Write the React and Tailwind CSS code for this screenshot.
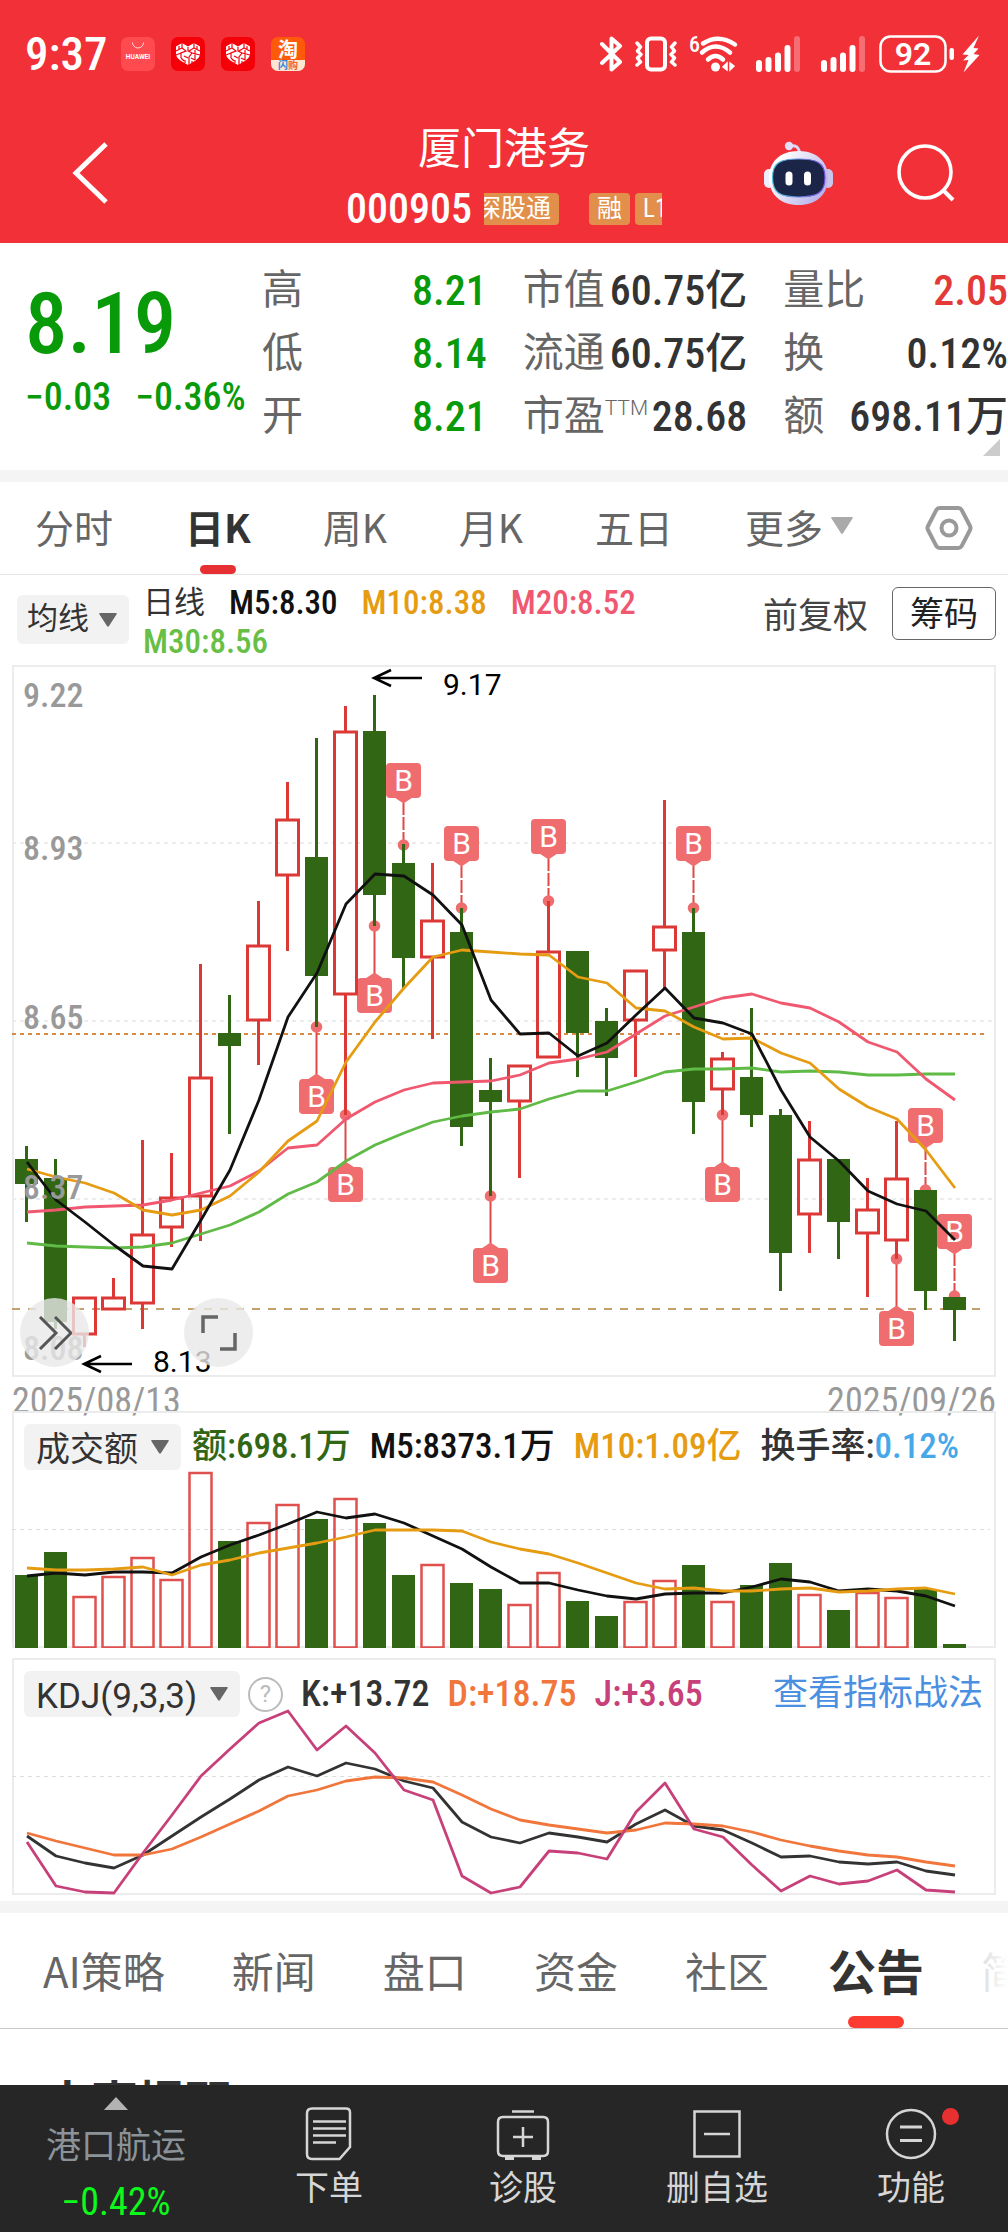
import { useState } from "react";

// [up?, high, bodyTop, bodyBottom, low] in chart units
const candles = [
  [0, 481, 494, 519, 557],
  [0, 494, 513, 657, 664],
  [1, 633, 633, 669, 682],
  [1, 613, 633, 644, 644],
  [1, 475, 570, 638, 664],
  [1, 488, 533, 562, 582],
  [1, 299, 413, 531, 576],
  [0, 330, 368, 381, 469],
  [1, 236, 281, 355, 400],
  [1, 117, 155, 210, 286],
  [0, 73, 192, 311, 362],
  [1, 41, 67, 329, 450],
  [0, 30, 66, 230, 261],
  [0, 179, 198, 293, 323],
  [1, 198, 256, 292, 374],
  [0, 243, 267, 462, 481],
  [0, 393, 425, 437, 531],
  [1, 401, 401, 436, 513],
  [1, 236, 287, 392, 392],
  [0, 286, 286, 368, 412],
  [0, 343, 356, 393, 431],
  [1, 306, 306, 355, 412],
  [1, 135, 262, 285, 323],
  [0, 243, 267, 437, 469],
  [1, 387, 394, 424, 450],
  [0, 343, 412, 450, 462],
  [0, 444, 450, 588, 626],
  [1, 456, 495, 549, 588],
  [0, 494, 494, 557, 594],
  [1, 513, 545, 568, 632],
  [1, 456, 514, 575, 594],
  [0, 525, 525, 626, 645],
  [0, 632, 632, 645, 676],
];

const maLines = [
  {
    color: "#5fba46",
    points: [578, 581, 582, 583, 582, 578, 569, 560, 547, 529, 517, 496, 480, 468, 457, 451, 447, 444, 434, 426, 426, 417, 407, 404, 404, 403, 407, 406, 407, 410, 410, 409, 409],
  },
  {
    color: "#f0586f",
    points: [547, 545, 542, 541, 540, 535, 528, 521, 506, 483, 480, 454, 437, 425, 418, 417, 416, 410, 398, 394, 387, 369, 351, 342, 333, 329, 338, 343, 357, 377, 387, 414, 435],
  },
  {
    color: "#e69c12",
    points: [504, 512, 518, 528, 545, 550, 545, 531, 507, 476, 456, 397, 357, 323, 292, 285, 287, 289, 290, 312, 318, 343, 346, 362, 374, 373, 388, 398, 424, 442, 454, 485, 523],
  },
  {
    color: "#111111",
    points: [497, 535, 557, 580, 601, 604, 555, 505, 435, 352, 308, 239, 209, 211, 230, 260, 335, 369, 368, 391, 378, 350, 323, 353, 358, 369, 425, 472, 496, 526, 539, 546, 575],
  },
];

// [candle index, dot y, label above?]
const signals = [
  [10, 362, false],
  [11, 450, false],
  [12, 261, false],
  [13, 180, true],
  [15, 243, true],
  [16, 531, false],
  [18, 236, true],
  [23, 243, true],
  [24, 450, false],
  [30, 594, false],
  [31, 525, true],
  [32, 631, true],
];

const volumeTops = [164, 141, 186, 166, 147, 169, 62, 130, 112, 94, 108, 88, 112, 164, 154, 172, 178, 194, 162, 190, 205, 191, 170, 154, 191, 174, 152, 184, 199, 182, 187, 178, 233];
const volumeM5 = [165, 162, 164, 161, 161, 162, 146, 134, 124, 113, 101, 107, 103, 112, 125, 138, 156, 172, 172, 179, 185, 188, 183, 182, 182, 176, 168, 171, 180, 178, 180, 185, 195];
const volumeM10 = [157, 159, 159, 158, 156, 164, 154, 149, 142, 137, 132, 126, 119, 119, 119, 120, 131, 138, 143, 152, 162, 172, 178, 177, 180, 180, 178, 177, 181, 180, 178, 177, 183];

const kdjLines = [
  {
    color: "#333333",
    points: [178, 198, 205, 210, 197, 178, 159, 141, 122, 109, 118, 105, 111, 123, 130, 164, 179, 185, 175, 179, 184, 166, 152, 168, 172, 185, 199, 198, 204, 206, 204, 213, 217],
  },
  {
    color: "#f0763c",
    points: [175, 183, 190, 197, 197, 191, 179, 166, 153, 138, 132, 123, 119, 120, 124, 137, 151, 162, 167, 171, 175, 172, 165, 166, 168, 174, 182, 188, 193, 197, 199, 204, 208],
  },
  {
    color: "#c8407a",
    points: [184, 228, 234, 235, 195, 157, 118, 91, 65, 53, 92, 68, 95, 132, 142, 218, 235, 229, 193, 195, 201, 154, 125, 171, 179, 207, 233, 218, 226, 223, 212, 232, 234],
  },
];

const quotes = [
  ["高", "8.21", "text-[#099a09]"],
  ["市值", "60.75亿", "text-[#333]"],
  ["量比", "2.05", "text-[#e33a38]"],
  ["低", "8.14", "text-[#099a09]"],
  ["流通", "60.75亿", "text-[#333]"],
  ["换", "0.12%", "text-[#333]"],
  ["开", "8.21", "text-[#099a09]"],
  ["市盈", "28.68", "text-[#333]", "TTM"],
  ["额", "698.11万", "text-[#333]"],
];

const centerX = (i) => 15 + i * 29;
const toPoints = (ys) => ys.map((y, i) => `${centerX(i)},${y}`).join(" ");

const Line = ({ color, points }) => (
  <polyline points={toPoints(points)} fill="none" stroke={color} strokeWidth="2.8" strokeLinejoin="round" />
);

const Triangle = ({ className }) => (
  <svg className={className} viewBox="0 0 18 14" fill="currentColor" aria-hidden="true">
    <path d="M1 0h16q1.400 0 .6 1.200L10 13q-1 1.400-2 0L.4 1.200Q-.4 0 1 0Z" />
  </svg>
);

const PillSelect = ({ label, value, className }) => (
  <div className="relative shrink-0">
    <select
      aria-label={label}
      defaultValue={value}
      className={`block appearance-none rounded-md bg-[#f2f2f2] text-[#333] ${className}`}
    >
      <option>{value}</option>
    </select>
    <Triangle className="pointer-events-none absolute right-3 top-1/2 w-[18px] -translate-y-1/2 text-[#666]" />
  </div>
);

const SignalBars = () => (
  <svg className="h-9 w-11" viewBox="0 0 44 36" fill="#fff" aria-hidden="true">
    <rect x="0" y="24" width="6" height="12" rx="3" />
    <rect x="9.500" y="21" width="6" height="15" rx="3" />
    <rect x="19" y="16.500" width="6" height="19.500" rx="3" />
    <rect x="28.500" y="9" width="6" height="27" rx="3" />
    <rect x="38" y="0" width="6" height="36" rx="3" opacity=".3" />
  </svg>
);

const HeartApp = () => (
  <svg className="size-[34px]" viewBox="0 0 34 34" aria-hidden="true">
    <rect width="34" height="34" rx="7" fill="#f50009" />
    <path d="M5 9.500 11 6l6 3.500L23 6l6 3.500V17c0 3-3 5.500-6 7.500L17 28l-6-3.500C8 22.500 5 20 5 17Z" fill="#fff" />
    <path
      d="M11 6v5l-6 3M11 11l4 3-5 2v5M5 18l5-2M17 10v4l4 2-3 4v8M13 19l4 2M23 6v5l-5 3M23 11l6 3M21 16l8 2M24 13v10M20 21l4 2M10 21l3 3M8 9v3M26 9v3M14 23v3M21 24v2"
      stroke="#f50009"
      strokeWidth="1.200"
      fill="none"
    />
  </svg>
);

const StatusBar = () => (
  <div className="flex h-[108px] items-center pl-[25px] pr-[28px]">
    <span className="text-[47px] font-medium leading-[48px]">9:37</span>
    <div className="ml-[14px] flex gap-4">
      <svg className="size-[34px]" viewBox="0 0 34 34" aria-hidden="true">
        <rect width="34" height="34" rx="7" fill="#ff4a50" />
        <path d="M11.500 5.500a5.500 5.500 0 0 0 11 0" stroke="#fff" strokeOpacity=".8" fill="none" />
        <text x="17" y="22" fontSize="6.500" fontWeight="700" fill="#fff" textAnchor="middle" fontFamily="Roboto, sans-serif">HUAWEI</text>
      </svg>
      <HeartApp />
      <HeartApp />
      <svg className="size-[34px] overflow-visible" viewBox="0 0 34 34" aria-hidden="true">
        <rect width="34" height="34" rx="7" fill="#ff5a0a" />
        <path d="M0 23h34v4a7 7 0 0 1-7 7H7a7 7 0 0 1-7-7Z" fill="#fde6d4" />
        <text x="17" y="20" fontSize="20" fontWeight="700" fill="#fff" textAnchor="middle">淘</text>
        <text x="17" y="32" fontSize="10" fontWeight="700" fill="#f0641e" textAnchor="middle">
          <tspan fill="#2f86d8">闪</tspan>购
        </text>
      </svg>
    </div>
    <div className="ml-auto flex items-center">
      <svg className="h-9 w-6" viewBox="0 0 24 36" fill="none" stroke="#fff" strokeWidth="4" strokeLinecap="round" strokeLinejoin="round" aria-hidden="true">
        <path d="m3 8 18 18-8.500 7.500v-31L21 10 3 27" />
      </svg>
      <svg className="ml-3 h-9 w-[42px]" viewBox="0 0 42 36" fill="none" stroke="#fff" strokeWidth="3.500" strokeLinecap="round" strokeLinejoin="round" aria-hidden="true">
        <rect x="12" y="2.500" width="18" height="31" rx="4" strokeWidth="4" />
        <path d="M2 7l3.500 4L2.500 15 6 18.500 2.500 22 5.500 26 2 29M40 7l-3.500 4 3 4-3.500 3.500 3.500 3.500-3 4 3.500 3" />
      </svg>
      <svg className="ml-3 h-[38px] w-[49px] overflow-visible" viewBox="0 0 49 38" fill="none" stroke="#fff" strokeWidth="4.500" strokeLinecap="round" aria-hidden="true">
        <text x="0" y="17" fontSize="22" fontWeight="500" fill="#fff" stroke="none">6</text>
        <path d="M14 8.500q15.500-10 32 1M13 17.500q13.500-12 28 0M19 24.500q7.500-7 15 0" />
        <circle cx="26.500" cy="32" r="4.500" fill="#fff" stroke="none" />
        <path d="M38 28v7l-4-3ZM41 28v7l4-4Z" fill="#fff" strokeWidth="1.500" />
      </svg>
      <div className="ml-[18px] flex gap-[21px]">
        <SignalBars />
        <SignalBars />
      </div>
      <svg className="ml-[14px] h-[38px] w-[76px]" viewBox="0 0 76 38" fill="none" aria-hidden="true">
        <rect x="1.500" y="1.500" width="65" height="35" rx="10" stroke="#fff" strokeWidth="2.500" />
        <rect x="70.500" y="13" width="4.500" height="12" rx="2.200" fill="#fff" />
        <text x="34" y="30" fontSize="32" fontWeight="600" fill="#fff" textAnchor="middle" fontFamily="Roboto, sans-serif">92</text>
      </svg>
      <svg className="ml-[7px] h-[38px] w-[18px]" viewBox="0 0 18 38" fill="#fff" aria-hidden="true">
        <path d="M17 .5.500 19.500l6 .5-5.500 5.500 5.500-.5-5 12.500L17.500 20l-6-1 5-5.500-5-.5Z" />
      </svg>
    </div>
  </div>
);

const Robot = () => (
  <svg className="h-16 w-[69px]" viewBox="0 0 69 64" aria-hidden="true">
    <defs>
      <linearGradient id="robotHead" x1="0" y1="0" x2="1" y2=".6">
        <stop offset=".2" stopColor="#ffffff" />
        <stop offset="1" stopColor="#b9b4ea" />
      </linearGradient>
      <linearGradient id="robotRim" x1="0" y1="0" x2="1" y2="0">
        <stop offset="0" stopColor="#4fc3dd" />
        <stop offset="1" stopColor="#7b4ee0" />
      </linearGradient>
    </defs>
    <path d="M25 5c8-1 9 1 11 7" stroke="#dcd6f5" strokeWidth="3" fill="none" />
    <circle cx="25" cy="5" r="4.200" fill="#e4defa" />
    <rect x="0" y="28" width="10" height="19" rx="5" fill="#efedfb" />
    <rect x="59" y="28" width="10" height="19" rx="5" fill="#c9c6ee" />
    <path d="M34.500 10C53 10 64 21 64 36.500 64 54 52 64 34.500 64S5 54 5 36.500C5 21 16 10 34.500 10Z" fill="url(#robotHead)" />
    <path d="M34.500 18C52 18 61 21 61 36.500S53 56 34.500 56 8.500 52 8.500 36.500 17 18 34.500 18Z" fill="#1b2547" stroke="url(#robotRim)" strokeWidth="1.200" />
    <rect x="21.500" y="30.500" width="7" height="14" rx="3.500" fill="#fff" />
    <rect x="40" y="30.500" width="7" height="14" rx="3.500" fill="#fff" />
  </svg>
);

const Tag = ({ children }) => (
  <span className="shrink-0 rounded-sm bg-[#e28f4b] px-2 text-[25px] leading-8">{children}</span>
);

const Header = () => (
  <header className="bg-[#f23037] text-white">
    <StatusBar />
    <div className="grid h-[135px] grid-cols-[1fr_auto_1fr] items-center pb-[10px]">
      <button type="button" aria-label="返回" className="justify-self-start pl-[72px]">
        <svg className="h-[62px] w-9" viewBox="0 0 36 62" fill="none" stroke="#fff" strokeWidth="5" aria-hidden="true">
          <path d="M34 2 4 31l30 29" />
        </svg>
      </button>
      <div className="pt-3">
        <h1 className="text-center text-[43px] leading-[59px]">厦门港务</h1>
        <div className="flex h-[59px] items-center gap-3">
          <span className="text-[42px] font-medium leading-[59px]">000905</span>
          <div className="w-[178px] overflow-hidden">
            <div className="-ml-4 flex gap-[5px]">
              <Tag>深股通</Tag>
              <span className="w-5 shrink-0" />
              <Tag>融</Tag>
              <Tag>L1</Tag>
            </div>
          </div>
        </div>
      </div>
      <div className="flex items-center justify-end gap-16 pr-[53px]">
        <button type="button" aria-label="智能助手">
          <Robot />
        </button>
        <button type="button" aria-label="搜索">
          <svg className="h-[58px] w-[58px]" viewBox="0 0 58 58" fill="none" stroke="#fff" strokeWidth="3.600" aria-hidden="true">
            <circle cx="28" cy="28" r="26" />
            <path d="m46 46 10 10" strokeWidth="4" />
          </svg>
        </button>
      </div>
    </div>
  </header>
);

const Quote = () => (
  <section className="relative flex h-[227px] pt-4">
    <div className="w-[262px] shrink-0 pl-[25px] text-[#099a09]">
      <p className="pt-[15px] text-[85px] font-medium leading-[100px]">8.19</p>
      <p className="flex gap-6 text-[38px] font-medium leading-[46px]">
        <span>−0.03</span>
        <span>−0.36%</span>
      </p>
    </div>
    <dl className="grid flex-1 auto-rows-[63px] grid-cols-3 gap-x-9 text-[42px] leading-[63px]">
      {quotes.map(([label, value, color, sup]) => (
        <div key={label} className="flex justify-between whitespace-nowrap">
          <dt className="flex text-[41px] text-[#666]">
            {label}
            {sup && <span className="-mt-2 font-[Roboto] text-[21px] font-light">{sup}</span>}
          </dt>
          <dd className={`font-medium ${color}`}>{value}</dd>
        </div>
      ))}
    </dl>
    <svg className="absolute bottom-[14px] right-2 size-[17px]" viewBox="0 0 17 17" fill="#ccc" aria-hidden="true">
      <path d="M17 0v17H0Z" />
    </svg>
  </section>
);

const periods = ["分时", "日K", "周K", "月K", "五日"];

const PeriodTabs = () => {
  const [active, setActive] = useState("日K");
  return (
    <nav className="flex h-[93px] items-center justify-between border-b border-[#e6e6e6] pl-[35px] pr-[35px] font-['Noto_Sans_CJK_SC',sans-serif] text-[39px] text-[#666]">
      {periods.map((p) => (
        <button
          key={p}
          type="button"
          onClick={() => setActive(p)}
          className={p === active ? "relative h-full pb-1 font-bold text-[#333]" : "relative h-full pb-1"}
        >
          {p}
          {p === active && <span className="absolute bottom-0 left-1/2 h-[9px] w-9 -translate-x-1/2 rounded-full bg-[#e63034]" />}
        </button>
      ))}
      <button type="button" className="flex items-center gap-2 pb-1">
        更多
        <Triangle className="w-[22px] text-[#aaa]" />
      </button>
      <button type="button" aria-label="设置">
        <svg className="h-[46px] w-12" viewBox="0 0 48 46" fill="none" stroke="#999" strokeWidth="4" strokeLinejoin="round" aria-hidden="true">
          <path d="M14.500 3h19q2 0 3 1.700L45 21q1 2 0 4l-8.500 16.300q-1 1.700-3 1.700h-19q-2 0-3-1.700L3 25q-1-2 0-4l8.500-16.300q1-1.700 3-1.700Z" />
          <circle cx="24" cy="23" r="7.500" />
        </svg>
      </button>
    </nav>
  );
};

const Legend = () => (
  <div className="flex h-[90px] items-start pl-[17px] pr-3">
    <div className="pt-5">
      <PillSelect label="指标" value="均线" className="h-[49px] pl-[10px] pr-[40px] text-[31px]" />
    </div>
    <div className="ml-[14px] flex flex-1 flex-wrap gap-x-6 pt-2 text-[33px] font-medium leading-[39px]">
      <span className="text-[31px] font-normal text-[#333]">日线</span>
      <span className="text-[#111]">M5:8.30</span>
      <span className="text-[#e69c12]">M10:8.38</span>
      <span className="text-[#f0586f]">M20:8.52</span>
      <span className="text-[#67bf46]">M30:8.56</span>
    </div>
    <button type="button" className="mt-[12px] text-[35px] leading-[60px] text-[#444]">前复权</button>
    <button type="button" className="ml-6 mt-3 h-[53px] w-[104px] rounded-md border border-[#666] text-[34px] leading-[50px] text-[#222]">
      筹码
    </button>
  </div>
);

const Marker = ({ index, y, above }) => {
  const x = centerX(index) - 0.5;
  const top = above ? y - 82 : y + 52;
  return (
    <g>
      <path
        d={above ? `M${x} ${y}V${top + 40}` : `M${x} ${y}V${top - 4}`}
        stroke="#e04848"
        strokeWidth="2"
        strokeDasharray={above ? "13 2" : undefined}
      />
      <circle cx={x} cy={y} r="5.800" fill="#ef6d6f" />
      <path
        d={above ? `M${x - 9} ${top + 34.5}h18l-9 6Z` : `M${x - 9} ${top + 0.5}h18l-9-6Z`}
        fill="#ef6d6f"
      />
      <rect x={x - 17.5} y={top} width="35" height="35" rx="4" fill="#ef6d6f" />
      <text x={x} y={top + 28} fontSize="30" fill="#fff" textAnchor="middle" fontFamily="Roboto, sans-serif">B</text>
    </g>
  );
};

const Arrow = ({ x, y }) => (
  <path d={`M${x + 48} ${y}H${x}m17-8L${x} ${y}l17 8`} fill="none" stroke="#000" strokeWidth="2.500" />
);

const CandleChart = () => (
  <div className="relative">
    <svg className="block w-full" viewBox="0 0 984 712" role="img" aria-label="日K线图">
      <rect x="1" y="1" width="982" height="710" fill="none" stroke="#ececec" strokeWidth="2" />
      <path d="M0 178H984M0 356H984M0 534H984" stroke="#ececec" strokeWidth="2" strokeDasharray="4 4" />
      <path d="M0 369H976" stroke="#d68a45" strokeWidth="2" strokeDasharray="4 4" />
      <path d="M0 644H976" stroke="#c4a06c" strokeWidth="2" strokeDasharray="8 8" />
      {signals.map(([index, y, above]) => (
        <Marker key={index} index={index} y={y} above={above} />
      ))}
      {candles.map(([up, high, top, bottom, low], i) => {
        const x = centerX(i) - 0.5;
        return up ? (
          <g key={i} stroke="#dc3836" strokeWidth="3" fill="none">
            <path d={`M${x} ${high}V${top}M${x} ${bottom}V${low}`} />
            <rect x={x - 11} y={top} width="22" height={bottom - top} />
          </g>
        ) : (
          <g key={i} fill="#306614">
            <rect x={x - 1.5} y={high} width="3" height={low - high} />
            <rect x={x - 11.5} y={top} width="23" height={bottom - top} />
          </g>
        );
      })}
      {maLines.map((line) => (
        <Line key={line.color} {...line} />
      ))}
      <g fontSize="34" fontWeight="500" fill="#999">
        <text x="11" y="42">9.22</text>
        <text x="11" y="195">8.93</text>
        <text x="11" y="364">8.65</text>
        <text x="11" y="534">8.37</text>
        <text x="11" y="695">8.08</text>
      </g>
      <g fontSize="30" fill="#000">
        <text x="431" y="30" fontFamily="Roboto, sans-serif">9.17</text>
        <text x="141" y="707" fontFamily="Roboto, sans-serif">8.13</text>
      </g>
      <Arrow x={362} y={13} />
      <Arrow x={72} y={699} />
    </svg>
    <div className="absolute bottom-[10px] left-2 flex gap-[95px]">
      <button type="button" aria-label="展开" className="flex size-[69px] items-center justify-center rounded-full bg-[#e8e8e8]/80">
        <svg className="h-[34px] w-[34px]" viewBox="0 0 34 34" fill="none" stroke="#555" strokeWidth="3" aria-hidden="true">
          <path d="m2 1 16 16L2 33M17 1l16 16-16 16" />
        </svg>
      </button>
      <button type="button" aria-label="全屏" className="flex size-[69px] items-center justify-center rounded-full bg-[#e8e8e8]/80">
        <svg className="h-9 w-9" viewBox="0 0 36 36" fill="none" stroke="#666" strokeWidth="3.500" aria-hidden="true">
          <path d="M2 18V2h15M34 18v16H19" />
        </svg>
      </button>
    </div>
  </div>
);

const VolumePanel = () => (
  <section className="grid">
    <svg className="col-start-1 row-start-1 block w-full" viewBox="0 0 984 237" role="img" aria-label="成交额">
      <rect x="1" y="1" width="982" height="235" fill="none" stroke="#ececec" strokeWidth="2" />
      <path d="M0 118.500H978" stroke="#ddd" strokeDasharray="4 4" />
      {volumeTops.map((top, i) => {
        const x = centerX(i) - 0.5;
        return candles[i][0] ? (
          <rect key={i} x={x - 11} y={top} width="22" height={236.5 - top} fill="none" stroke="#e0504e" strokeWidth="2.500" />
        ) : (
          <rect key={i} x={x - 11.5} y={top} width="23" height={237 - top} fill="#306614" />
        );
      })}
      <Line color="#111111" points={volumeM5} />
      <Line color="#e69c12" points={volumeM10} />
    </svg>
    <div className="col-start-1 row-start-1 flex h-12 items-center gap-[19px] whitespace-nowrap pl-3 pt-6 text-[35px] font-medium">
      <PillSelect label="副图指标" value="成交额" className="h-[46px] pl-3 pr-[43px] text-[34px] font-normal" />
      <span className="-ml-2 text-[#306614]">额:698.1万</span>
      <span className="text-[#111]">M5:8373.1万</span>
      <span className="text-[#e69c12]">M10:1.09亿</span>
      <span className="text-[#333]">
        换手率:<span className="text-[#46a8e8]">0.12%</span>
      </span>
    </div>
  </section>
);

const KdjPanel = () => (
  <section className="mt-[10px] grid">
    <svg className="col-start-1 row-start-1 block w-full" viewBox="0 0 984 237" role="img" aria-label="KDJ">
      <rect x="1" y="1" width="982" height="235" fill="none" stroke="#ececec" strokeWidth="2" />
      <path d="M0 118.500H978" stroke="#ddd" strokeDasharray="4 4" />
      {kdjLines.map((line) => (
        <Line key={line.color} {...line} />
      ))}
    </svg>
    <div className="col-start-1 row-start-1 flex h-12 items-center gap-[18px] whitespace-nowrap pl-3 pr-[13px] pt-6 text-[36px] font-medium">
      <PillSelect label="副图指标" value="KDJ(9,3,3)" className="h-[46px] pl-3 pr-[42px] font-[Roboto] text-[35px] font-normal" />
      <button type="button" aria-label="帮助" className="-ml-[10px] size-[35px] rounded-full border-2 border-[#bbb] font-[Roboto] text-[24px] font-normal leading-[31px] text-[#bbb]">
        ?
      </button>
      <span className="text-[#333]">K:+13.72</span>
      <span className="text-[#f0763c]">D:+18.75</span>
      <span className="text-[#c8407a]">J:+3.65</span>
      <a href="#strategy" className="ml-auto text-[35px] font-normal text-[#4a8fe0]">查看指标战法</a>
    </div>
  </section>
);

const sections = ["AI策略", "新闻", "盘口", "资金", "社区", "公告"];

const SectionTabs = () => {
  const [active, setActive] = useState("公告");
  return (
    <nav className="relative flex h-[116px] gap-[67px] overflow-hidden whitespace-nowrap border-b border-[#c8c8c8] pl-[43px] font-['Noto_Sans_CJK_SC',sans-serif] text-[42px] text-[#666]">
      {sections.map((s) => (
        <button
          key={s}
          type="button"
          onClick={() => setActive(s)}
          className={s === active ? "relative -ml-2 pb-[3px] text-[48px] font-bold text-[#333]" : "pb-[3px]"}
        >
          {s}
          {s === active && <span className="absolute bottom-0 left-1/2 h-3 w-14 -translate-x-1/2 rounded-full bg-[#fc3b31]" />}
        </button>
      ))}
      <button type="button" className="-ml-[10px] pb-[3px]">简况</button>
      <span className="pointer-events-none absolute inset-y-0 right-0 w-[60px] bg-linear-to-r from-white/50 to-white" />
    </nav>
  );
};

const NavItem = ({ label, children }) => (
  <button type="button" className="flex w-[194px] flex-col items-center pt-[21px] text-[34px] leading-[52px] text-[#d6d6d6]">
    <svg className="h-14 w-14 shrink-0" viewBox="0 0 56 56" fill="none" stroke="#d6d6d6" strokeWidth="2.500" aria-hidden="true">
      {children}
    </svg>
    {label}
  </button>
);

const BottomNav = () => (
  <nav className="flex h-[147px] shrink-0 bg-[#262626]">
    <button type="button" className="flex flex-1 flex-col items-center pt-3">
      <svg className="h-[14px] w-[26px]" viewBox="0 0 26 14" fill="#b3b3b3" aria-hidden="true">
        <path d="M13 0l13 14H0Z" />
      </svg>
      <span className="mt-3 text-[35px] leading-[50px] text-[#8b9398]">港口航运</span>
      <span className="text-[38px] leading-[60px] text-[#0cf91c]">−0.42%</span>
    </button>
    <NavItem label="下单">
      <path d="M11 2.500h34q4 0 4 4V41L38.500 53H11q-5 0-5-5V7.500q0-5 5-5Z" />
      <path d="M12 15.500h33M12 22.500h33M12 29.500h33M12 36.500h23" />
    </NavItem>
    <NavItem label="诊股">
      <path d="M8 11h40q5 0 5 5v29q0 5-5 5H8q-5 0-5-5V16q0-5 5-5ZM17 5.500h22M28 21v20M18 31h20" />
      <path d="M10 52h9M37 52h9" strokeWidth="4" />
    </NavItem>
    <NavItem label="删自选">
      <path d="M5.500 5.500h45v45h-45ZM15 28h26" />
    </NavItem>
    <div className="relative">
      <NavItem label="功能">
        <circle cx="28" cy="28" r="24" />
        <path d="M17 21h22M17 34.500h22" strokeWidth="3" />
      </NavItem>
      <span className="absolute right-[49px] top-[23px] size-[17px] rounded-full bg-[#e83030]" />
    </div>
  </nav>
);

export default function App() {
  return (
    <div className="flex h-screen flex-col overflow-hidden bg-white [font-family:'Roboto_Condensed',Roboto,'Noto_Sans_CJK_SC',sans-serif]">
      <Header />
      <main className="min-h-0 flex-1 overflow-hidden">
        <Quote />
        <div className="h-3 bg-[#f4f4f4]" />
        <PeriodTabs />
        <Legend />
        <div className="px-3 pb-[6px]">
          <CandleChart />
          <div className="flex h-[34px] justify-between text-[36px] leading-[48px] text-[#999]">
            <span>2025/08/13</span>
            <span>2025/09/26</span>
          </div>
          <VolumePanel />
          <KdjPanel />
        </div>
        <div className="h-3 bg-[#f4f4f4]" />
        <SectionTabs />
        <h2 className="pl-11 pt-12 text-[47px] font-bold leading-[54px] text-[#333]">大事提醒</h2>
      </main>
      <BottomNav />
    </div>
  );
}
